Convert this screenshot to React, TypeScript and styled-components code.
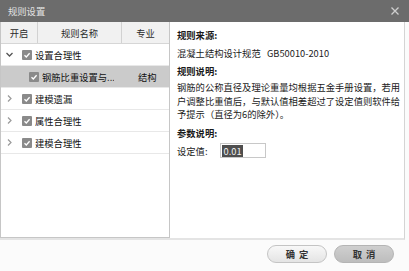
import React from "react";
import styled, { createGlobalStyle } from "styled-components";

const Global = createGlobalStyle`
  html, body { margin: 0; padding: 0; background: #fbfbfb; }
  body { font-family: "Noto Sans CJK SC", "Noto Sans", sans-serif; }
`;

const Window = styled.div`
  width: 409px;
  height: 271px;
  display: flex;
  flex-direction: column;
  background: #fbfbfb;
  font-size: 9.3px;
  color: #1a1a1a;
  overflow: hidden;
`;

const TitleBar = styled.div`
  height: 22px;
  flex: none;
  background: #6c6c6c;
  display: flex;
  align-items: center;
  justify-content: space-between;
  padding: 0 8px;
  color: #e2e2e2;
`;

const CloseBtn = styled.div`
  width: 10px;
  height: 10px;
  display: flex;
  margin-right: 1px;
`;

const Body = styled.div`
  height: 218px;
  width: 405px;
  flex: none;
  display: flex;
  background: #fff;
  border-right: 1px solid #d4d4d4;
  border-bottom: 2px solid #e4e4e4;
  box-sizing: border-box;
`;

const LeftPanel = styled.div`
  width: 170px;
  flex: none;
  border: 1px solid #c6c6c6;
  border-top: none;
  box-sizing: border-box;
  display: flex;
  flex-direction: column;
  background: #fff;
`;

const HeaderRow = styled.div`
  display: grid;
  grid-template-columns: 37px 84px 1fr;
  height: 22px;
  background: #f1f1f1;
  border-bottom: 1px solid #d6d6d6;
  box-sizing: border-box;
`;

const HeaderCell = styled.div<{ $last?: boolean }>`
  display: flex;
  align-items: center;
  justify-content: center;
  border-right: ${(p) => (p.$last ? "none" : "1px solid #d2d2d2")};
  color: #2a2a2a;
`;

const TreeRow = styled.div<{ $selected?: boolean; $indent?: number }>`
  height: 22px;
  flex: none;
  display: flex;
  align-items: center;
  box-sizing: border-box;
  border-bottom: 1px solid #e8e8e8;
  background: ${(p) => (p.$selected ? "#cbcbcb" : "#fff")};
  padding-left: ${(p) => p.$indent ?? 4}px;
  color: #111;
`;

const Chevron = styled.div`
  width: 9px;
  height: 9px;
  display: flex;
  margin-right: 8px;
`;

const Check = styled.div`
  width: 10px;
  height: 10px;
  border-radius: 1px;
  background: #8a8a8a;
  display: flex;
  align-items: center;
  justify-content: center;
  margin-right: 3px;
  flex: none;
`;

const RowLabel = styled.span<{ $width?: number }>`
  width: ${(p) => (p.$width ? `${p.$width}px` : "auto")};
  white-space: nowrap;
  overflow: hidden;
`;

const RowTag = styled.span`
  margin-left: 24px;
`;

const RightPanel = styled.div`
  flex: 1;
  padding: 4px 0 0 7px;
  display: flex;
  flex-direction: column;
`;

const Label = styled.div<{ $bold?: boolean; $gap?: number }>`
  height: 18px;
  line-height: 18px;
  font-weight: ${(p) => (p.$bold ? 700 : 400)};
  margin-top: ${(p) => p.$gap ?? 0}px;
  white-space: pre;
  color: #1a1a1a;
`;

const Desc = styled.div`
  line-height: 13.5px;
  margin-top: 1px;
  color: #1a1a1a;
`;

const ParamRow = styled.div`
  height: 18px;
  display: flex;
  align-items: center;
  gap: 13px;
`;

const InputBox = styled.div`
  width: 46px;
  height: 15px;
  box-sizing: border-box;
  border: 1px solid #c8c8c8;
  display: flex;
  align-items: center;
  padding-left: 1px;
  background: #fff;
`;

const Selected = styled.span`
  background: #4e4e4e;
  color: #f2f2f2;
  line-height: 12px;
  padding: 0 1px;
`;

const Footer = styled.div`
  flex: 1;
  display: flex;
  align-items: center;
  justify-content: flex-end;
  gap: 7px;
  padding: 0 15px 4px 0;
`;

const Button = styled.div<{ $dark?: boolean }>`
  width: 60px;
  height: 18px;
  border-radius: 9px;
  box-sizing: border-box;
  border: 1px solid ${(p) => (p.$dark ? "#b4b4b4" : "#c4c4c4")};
  background: ${(p) =>
    p.$dark
      ? "linear-gradient(#cfcfcf, #bdbdbd)"
      : "linear-gradient(#f8f8f8, #e4e4e4)"};
  display: flex;
  align-items: center;
  justify-content: center;
  letter-spacing: 4px;
  padding-left: 4px;
  color: #333;
  font-weight: 700;
`;

const ChevronIcon = ({ open }: { open?: boolean }) => (
  <svg width="9" height="9" viewBox="0 0 9 9">
    {open ? (
      <path d="M1.5 3 L4.5 6 L7.5 3" fill="none" stroke="#555" strokeWidth="1.3" />
    ) : (
      <path d="M3 1.5 L6 4.5 L3 7.5" fill="none" stroke="#9a9a9a" strokeWidth="1.2" />
    )}
  </svg>
);

const CheckIcon = () => (
  <Check>
    <svg width="8" height="8" viewBox="0 0 8 8">
      <path d="M1.5 4.2 L3.3 6 L6.6 2.2" fill="none" stroke="#fff" strokeWidth="1.3" />
    </svg>
  </Check>
);

export default function App() {
  return (
    <>
      <Global />
      <Window>
        <TitleBar>
          <span>规则设置</span>
          <CloseBtn>
            <svg width="10" height="10" viewBox="0 0 10 10">
              <path d="M1.5 1.5 L8.5 8.5 M8.5 1.5 L1.5 8.5" stroke="#cfcfcf" strokeWidth="1.3" />
            </svg>
          </CloseBtn>
        </TitleBar>
        <Body>
          <LeftPanel>
            <HeaderRow>
              <HeaderCell>开启</HeaderCell>
              <HeaderCell>规则名称</HeaderCell>
              <HeaderCell $last>专业</HeaderCell>
            </HeaderRow>
            <TreeRow>
              <Chevron><ChevronIcon open /></Chevron>
              <CheckIcon />
              <RowLabel>设置合理性</RowLabel>
            </TreeRow>
            <TreeRow $selected $indent={28}>
              <CheckIcon />
              <RowLabel $width={72}>钢筋比重设置与...</RowLabel>
              <RowTag>结构</RowTag>
            </TreeRow>
            <TreeRow>
              <Chevron><ChevronIcon /></Chevron>
              <CheckIcon />
              <RowLabel>建模遗漏</RowLabel>
            </TreeRow>
            <TreeRow>
              <Chevron><ChevronIcon /></Chevron>
              <CheckIcon />
              <RowLabel>属性合理性</RowLabel>
            </TreeRow>
            <TreeRow>
              <Chevron><ChevronIcon /></Chevron>
              <CheckIcon />
              <RowLabel>建模合理性</RowLabel>
            </TreeRow>
          </LeftPanel>
          <RightPanel>
            <Label $bold>规则来源:</Label>
            <Label>{"混凝土结构设计规范   GB50010-2010"}</Label>
            <Label $bold>规则说明:</Label>
            <Desc>
              钢筋的公称直径及理论重量均根据五金手册设置，若用
              <br />
              户调整比重值后，与默认值相差超过了设定值则软件给
              <br />
              予提示（直径为6的除外）。
            </Desc>
            <Label $bold $gap={2}>参数说明:</Label>
            <ParamRow>
              <span>设定值:</span>
              <InputBox>
                <Selected>0.01</Selected>
              </InputBox>
            </ParamRow>
          </RightPanel>
        </Body>
        <Footer>
          <Button>确定</Button>
          <Button $dark>取消</Button>
        </Footer>
      </Window>
    </>
  );
}
